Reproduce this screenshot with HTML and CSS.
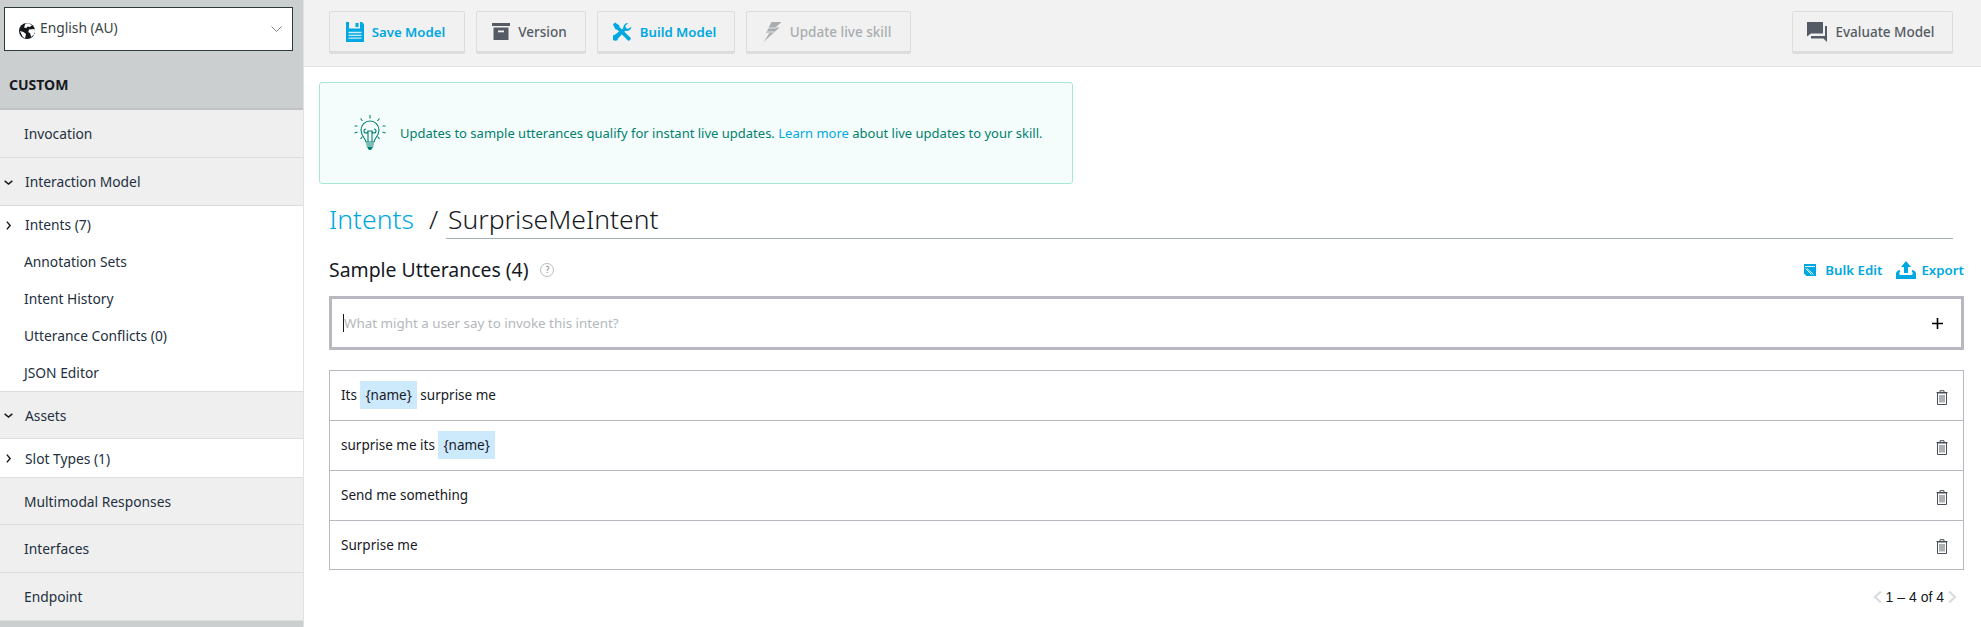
FILE: index.html
```html
<!DOCTYPE html>
<html lang="en">
<head>
<meta charset="utf-8">
<title>Interaction Model</title>
<link rel="stylesheet" href="styles.css">
</head>
<body>
<div class="app">
  <aside class="sidebar">
    <div class="locale-wrap">
      <div class="locale">
        <svg class="globe" viewBox="0 0 16 16"><circle cx="8" cy="8" r="8" fill="#16191c"/><path d="M6.500.5 10 .3 13 2.500 10.500 4 8.500 3.500 7.500 5 5 4.500ZM10 6.500l5.700-.5.300 3-1.500 3-2.500 2-.7-3.500-2-1.500ZM1 8l3.500 1 2.500 2-1 4.500-2.500-2Z" fill="#fff"/></svg>
        <span class="locale-name">English (AU)</span>
        <svg class="locale-caret" viewBox="0 0 11 6"><path d="M.5.500l5 5 5-5" fill="none" stroke="#7b8687" stroke-width="1"/></svg>
      </div>
    </div>
    <div class="side-title">CUSTOM</div>
    <div class="side-item">Invocation</div>
    <div class="side-item caret-item"><svg class="caret" viewBox="0 0 10 10"><path d="M1.500 3.500l3.500 3 3.500-3" fill="none" stroke="#16191c" stroke-width="1.300"/></svg>Interaction Model</div>
    <div class="side-group">
      <div class="side-sub caret-item"><svg class="caret" viewBox="0 0 10 10"><path d="M3.500 1.500l3 3.500-3 3.500" fill="none" stroke="#16191c" stroke-width="1.300"/></svg>Intents (7)</div>
      <div class="side-sub">Annotation Sets</div>
      <div class="side-sub">Intent History</div>
      <div class="side-sub">Utterance Conflicts (0)</div>
      <div class="side-sub">JSON Editor</div>
    </div>
    <div class="side-item caret-item top-line"><svg class="caret" viewBox="0 0 10 10"><path d="M1.500 3.500l3.500 3 3.500-3" fill="none" stroke="#16191c" stroke-width="1.300"/></svg>Assets</div>
    <div class="side-group"><div class="side-sub side-sub-slot caret-item"><svg class="caret" viewBox="0 0 10 10"><path d="M3.500 1.500l3 3.500-3 3.500" fill="none" stroke="#16191c" stroke-width="1.300"/></svg>Slot Types (1)</div></div>
    <div class="side-item top-line">Multimodal Responses</div>
    <div class="side-item">Interfaces</div>
    <div class="side-item">Endpoint</div>
  </aside>
  <main class="main">
    <div class="toolbar">
      <button class="btn btn-blue btn-save"><svg viewBox="0 0 18 20" class="ico"><path d="M0 0h3v6.500h11V0h2l2 2v18H0Z" fill="#00a8e1"/><path d="M9.500 1h3v4h-3Z" fill="#00a8e1"/><path d="M2.500 10.500h13M2.500 13.300h13M2.500 16.100h13" stroke="#c8ecf8" stroke-width="1.300"/></svg>Save Model</button>
      <button class="btn btn-version"><svg viewBox="0 0 18 17" class="ico ico-box"><path d="M0 0h18v3H0ZM1.500 4.500h15V17h-15Z" fill="#545b64"/><path d="M6 7.500h6v1.800H6Z" fill="#f2f2f2"/></svg>Version</button>
      <button class="btn btn-blue btn-build"><svg viewBox="0 0 20 20" class="ico ico-w"><path d="M19.500 4.500a5 5 0 0 1-6.500 4.200L5.500 16.500a3.100 3.100 0 1 1-3.500-3.500L10.800 6A5 5 0 0 1 16 .5L13 3.500l.7 2.500 2.500.7Z" fill="#00a8e1"/><path d="M0 2 2 0l4.500 3 .5 2 11.500 11a2.300 2.300 0 0 1-2.800 3L4.500 7.500l-2-.5Z" fill="#00a8e1"/></svg>Build Model</button>
      <button class="btn btn-disabled btn-live"><svg viewBox="0 0 18 20" class="ico ico-w"><path d="M8 0h10l-6 5.500h4L0 20l6-9H2.500Z" fill="#a9adb0"/><path d="M4 6h9M3 10h8M7 14h4" stroke="#f1f1f1" stroke-width=".8"/></svg>Update live skill</button>
      <div class="spacer"></div>
      <button class="btn btn-eval"><svg viewBox="0 0 20 20" class="ico ico-e"><path d="M0 0h16v11.500H4L0 14.500Z" fill="#545b64"/><path d="M18 4h2v16l-3.500-3.500H4V14h14Z" fill="#545b64"/></svg>Evaluate Model</button>
    </div>
    <div class="content">
      <div class="banner">
        <svg class="bulb" viewBox="0 0 32 36"><g fill="none" stroke="#00806e" stroke-width="1.100"><path d="M16 0v3.500M6.500 3.500l2 2.500M25.500 3.500l-2 2.500M.5 11h3M.5 18l3-1M31.500 11h-3M31.500 18l-3-1M6.500 24l2-2.500M25.500 24l-2-2.500"/><path d="M12 27c0-3-5-6-5-12a9 9 0 0 1 18 0c0 6-5 9-5 12Z"/><path d="M14 27V16h4v11M14 16a2 2 0 1 1-2-2M18 16a2 2 0 1 0 2-2"/><path d="M12 29h8M12.500 31h7"/></g><path d="M13 32h6l-2 3h-2Z" fill="#00806e"/></svg>
        <p class="banner-text">Updates to sample utterances qualify for instant live updates. <a class="link">Learn more</a> about live updates to your skill.</p>
      </div>
      <div class="crumbs">
        <span class="crumb-link">Intents</span>
        <span class="crumb-sep">/</span>
        <span class="crumb-name">SurpriseMeIntent</span>
      </div>
      <div class="section-head">
        <h2 class="section-title">Sample Utterances (4)</h2>
        <span class="help">?</span>
        <div class="spacer"></div>
        <a class="action action-bulk"><svg viewBox="0 0 12 12" class="act-ico"><path d="M0 0h12v12H2.500L0 9.500Z" fill="#00a8e1"/><path d="M1 2.500h10M3 4.500l6.500 6M1.500 4.500l6 6" stroke="#fff" stroke-width=".9"/></svg>Bulk Edit</a>
        <a class="action action-export"><svg viewBox="0 0 20 18" class="act-ico act-ico-l"><path d="M10 0l5 6h-3v6H8V6H5Z" fill="#00a8e1"/><path d="M0 13c0-2 1-3.500 4-4v2C3 11.500 3 12.500 4 14h12c1-1.500 1-2.500 0-3V9c3 .5 4 2 4 4v5H0Z" fill="#00a8e1"/></svg>Export</a>
      </div>
      <div class="add-box">
        <span class="cursor"></span>
        <span class="placeholder">What might a user say to invoke this intent?</span>
        <svg class="plus" viewBox="0 0 11 11"><path d="M5.500 0v11M0 5.500h11" stroke="#000" stroke-width="1.600"/></svg>
      </div>
      <div class="list">
        <div class="row"><span class="row-text">Its <span class="slot">{name}</span> surprise me</span><svg class="trash" viewBox="0 0 12 15"><use href="#trash"/></svg></div>
        <div class="row"><span class="row-text">surprise me its <span class="slot">{name}</span></span><svg class="trash" viewBox="0 0 12 15"><use href="#trash"/></svg></div>
        <div class="row"><span class="row-text">Send me something</span><svg class="trash" viewBox="0 0 12 15"><use href="#trash"/></svg></div>
        <div class="row"><span class="row-text">Surprise me</span><svg class="trash" viewBox="0 0 12 15"><use href="#trash"/></svg></div>
      </div>
      <div class="pager">
        <svg class="chev" viewBox="0 0 9 12"><path d="M8 .5 2 6l6 5.500" fill="none" stroke="#d9dbdc" stroke-width="2.200"/></svg>
        <span class="pager-text">1 – 4 of 4</span>
        <svg class="chev" viewBox="0 0 9 12"><path d="M1 .5 7 6l-6 5.500" fill="none" stroke="#d9dbdc" stroke-width="2.200"/></svg>
      </div>
    </div>
  </main>
</div>
<svg class="defs" width="0" height="0"><defs><g id="trash"><path d="M4 2V.7h4V2M.5 2.500h11" fill="none" stroke="#4a5058" stroke-width="1"/><path d="M1.500 3h9v11.500h-9Z" fill="none" stroke="#4a5058" stroke-width="1"/><path d="M4 5v7.500M6 5v7.500M8 5v7.500" stroke="#4a5058" stroke-width=".9"/></g></defs></svg>
</body>
</html>
```
FILE: styles.css
```css
* { box-sizing: border-box; }
html, body { margin: 0; height: 627px; overflow: hidden; }
body { font-family: "Noto Sans", "Open Sans", sans-serif; color: #16191f; background: #fff; }
.app { display: flex; height: 627px; }
.sidebar { width: 304px; flex: none; background: #cbcfcf; border-right: 1px solid #e1e3e3; font-size: 13.8px; }
.locale-wrap { padding: 7px 10px 0 4px; height: 66px; }
.locale { height: 44px; background: #fff; border: 1px solid #2e3a3c; display: flex; align-items: center; padding: 0 10px 0 14px; }
.globe { width: 16px; height: 16px; margin: 3px 5px 0 0; flex: none; }
.locale-name { flex: 1; color: #3b4446; margin-top: -3px; }
.locale-caret { width: 11px; height: 6px; }
.side-title { height: 44px; padding-left: 9px; font-weight: 700; font-size: 14px; line-height: 38px; border-bottom: 2px solid #bfc3c3; color: #16191f; }
.side-item { height: 48px; background: #efefef; border-bottom: 1px solid #dcdede; display: flex; align-items: center; padding-left: 24px; color: #232f3e; }
.side-group { background: #fff; }
.side-sub { height: 37px; display: flex; align-items: center; padding-left: 24px; color: #232f3e; background: #fff; }
.side-sub-slot { height: 38px; }
.side-group + .side-item.top-line { border-top: 1px solid #dcdede; }
.caret-item { padding-left: 25px; position: relative; }
.caret { position: absolute; left: 3px; top: 50%; width: 11px; height: 11px; margin-top: -5px; }
.main { flex: 1; min-width: 0; display: flex; flex-direction: column; }
.toolbar { height: 67px; flex: none; background: #f2f2f2; border-bottom: 1px solid #e1e3e3; padding: 11px 28px 0 25px; display: flex; align-items: flex-start; gap: 11px; }
.spacer { flex: 1; }
.btn { height: 43px; flex: none; display: flex; align-items: center; justify-content: center; background: #f1f1f1; border: 1px solid #dcdede; border-bottom-width: 3px; border-radius: 2px; font: 500 13.5px "Noto Sans", sans-serif; color: #545b64; padding: 0 3px 0 0; }
.btn-save { width: 136px; }
.btn-version { width: 110px; }
.btn-build { width: 138px; }
.btn-live { width: 165px; }
.btn-eval { width: 161px; }
.btn-blue { color: #00a8e1; font-weight: 600; font-size: 13.2px; }
.btn-disabled { color: #a9adb0; }
.ico { width: 18px; height: 20px; margin-right: 8px; }
.ico-box { height: 17px; }
.ico-w { width: 19px; height: 20px; }
.ico-e { width: 20px; height: 20px; margin-right: 8px; }
.content { flex: 1; padding: 15px 17px 0 15px; min-height: 0; }
.banner { width: 754px; height: 102px; border: 1px solid #a6e8d4; border-radius: 3px; background: #f5fdfc; display: flex; align-items: center; padding-left: 34px; color: #00806e; font-size: 13px; }
.bulb { width: 32px; height: 36px; margin-right: 14px; flex: none; }
.banner-text { margin: 0; white-space: nowrap; }
.link { color: #00a8e1; }
.crumbs { margin: 21px 0 0 10px; height: 34px; display: flex; align-items: flex-start; font-size: 26.5px; font-weight: 300; line-height: 28px; }
.crumb-link { color: #00a8e1; width: 100px; flex: none; }
.crumb-sep { width: 17px; flex: none; }
.crumb-name { flex: 1; border-bottom: 1px solid #a8b2b2; height: 34px; margin-right: 11px; padding-left: 2px; }
.section-head { margin: 12px 0 0 10px; height: 37px; display: flex; align-items: center; }
.section-title { margin: 0; font-size: 19.4px; font-weight: 400; }
.help { width: 14px; height: 14px; margin-left: 12px; border: 1px solid #b8bbbd; border-radius: 50%; font-size: 9px; line-height: 12px; text-align: center; color: #7a7f85; }
.action { display: flex; align-items: center; color: #00a8e1; font-size: 13.3px; font-weight: 600; }
.action-export { margin-left: 14px; }
.act-ico { width: 12px; height: 12px; margin-right: 9px; }
.act-ico-l { width: 20px; height: 18px; margin-right: 5px; }
.add-box { margin: 8px 0 0 10px; height: 54px; border: 3px solid #b8b8c0; display: flex; align-items: center; padding-left: 11px; font-size: 13.4px; }
.cursor { width: 1px; height: 18px; background: #16191f; flex: none; }
.placeholder { flex: 1; color: #b4b7bd; }
.plus { width: 11px; height: 11px; margin-right: 18px; }
.list { margin: 20px 0 0 10px; border: 1px solid #b8b8c0; font-size: 13.5px; }
.row { height: 50px; display: flex; align-items: center; justify-content: space-between; padding: 0 15px 0 11px; border-bottom: 1px solid #b8b8c0; }
.row:last-child { border-bottom: 0; height: 48px; }
.row-text { color: #16191f; margin-top: -1px; }
.slot { display: inline-block; background: #cdeafd; line-height: 28px; padding: 0 5px; }
.trash { width: 12px; height: 15px; margin-top: 3px; }
.pager { display: flex; justify-content: flex-end; align-items: center; margin-top: 19px; font-size: 14px; gap: 4px; padding-right: 7px; }
.pager-text { font-family: "Liberation Sans", sans-serif; }
.chev { width: 9px; height: 12px; }
.defs { position: absolute; }
```
